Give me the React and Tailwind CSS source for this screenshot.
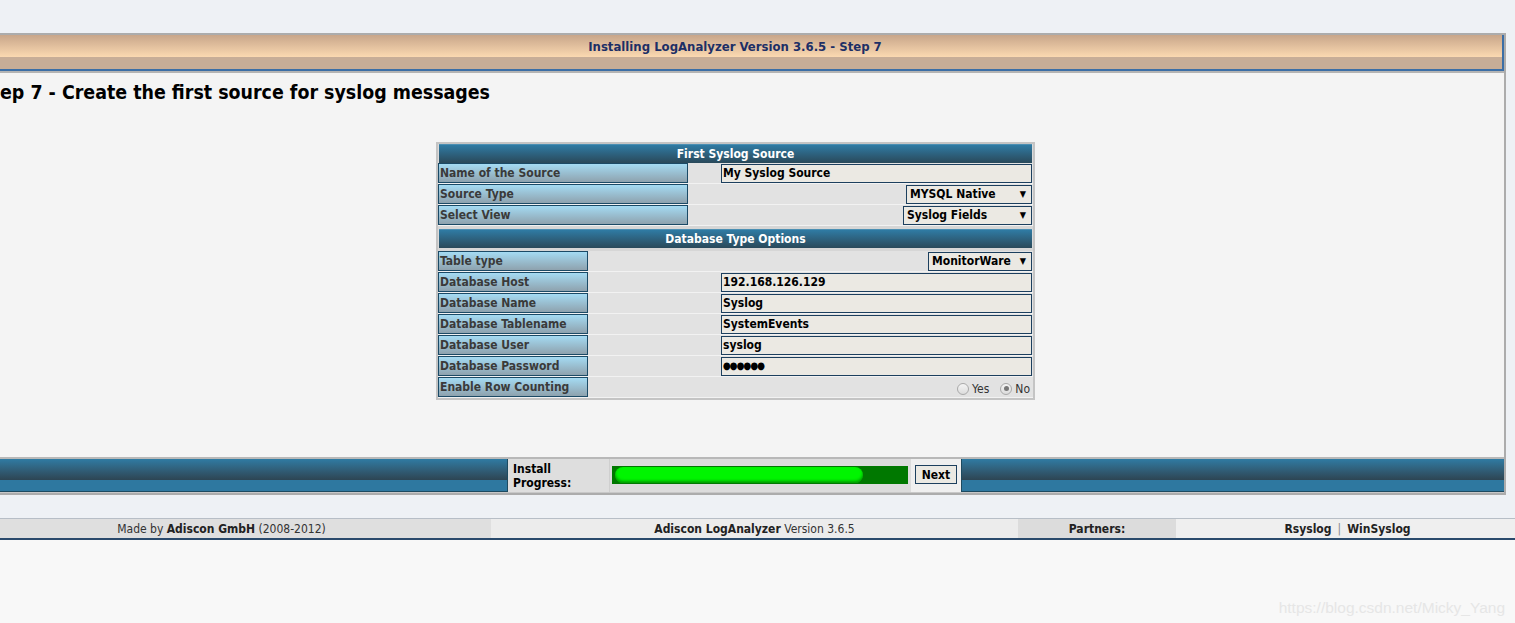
import React from 'react';

const font = { fontFamily: '"DejaVu Sans Condensed", "DejaVu Sans", sans-serif' };

const labelCls =
  'flex items-center h-full border border-[#1b4a66] bg-gradient-to-b from-[#a4dbf3] to-[#8ea2ae] pl-px text-[12px] font-bold text-[#3a3a3a] leading-none';

const Header = ({ children, className = '' }) => (
  <div
    className={`h-[19px] mx-px flex items-center justify-center border-t border-[#4b8fb3] bg-gradient-to-b from-[#2f7ba4] to-[#29495a] text-[12px] font-bold text-white leading-none ${className}`}
  >
    {children}
  </div>
);

const Row = ({ label, labelW, children }) => (
  <div className="h-[21px] flex items-stretch border-b border-[#f2f2f2] bg-[#e2e2e2]">
    <div className={labelW}>
      <div className={labelCls}>{label}</div>
    </div>
    <div className="flex-1 flex items-center justify-end pr-px">{children}</div>
  </div>
);

const TextField = ({ value }) => (
  <div className="w-[311px] h-[19px] border border-[#1c3f5e] bg-[#ebe9e3] flex items-center pl-px text-[12px] font-bold text-black leading-none">
    {value}
  </div>
);

const SelectField = ({ value, w }) => (
  <div
    className={`${w} h-[19px] border border-[#1c3f5e] bg-[#ebe9e3] flex items-center justify-between px-[3px] text-[12px] font-bold text-black leading-none`}
  >
    <span>{value}</span>
    <span className="text-[9px] pr-[2px]">▼</span>
  </div>
);

const Radio = ({ checked }) => (
  <span className="w-[12px] h-[12px] rounded-full border border-[#a9a9a9] bg-gradient-to-b from-[#f4f4f4] to-[#dcdcdc] flex items-center justify-center">
    {checked && <span className="w-[5px] h-[5px] rounded-full bg-[#777]" />}
  </span>
);

const Bar = ({ className = '' }) => (
  <div className={`flex flex-col ${className}`}>
    <div className="h-[21px] bg-gradient-to-b from-[#2f7ba3] to-[#2d4553]" />
    <div className="flex-1 bg-[#2e78a0] border-b border-[#1d4a60]" />
  </div>
);

export default function App() {
  return (
    <div className="relative w-full h-[623px] overflow-hidden bg-[#f8f8f8]" style={font}>
      <div className="bg-[#eef1f5] pt-[33px] pb-[23px]">
        {/* main box */}
        <div className="w-[1506px] border-y-2 border-r-2 border-[#acacac]">
          {/* title bar */}
          <div className="h-[36px] flex flex-col border-b-2 border-r-2 border-[#3b6ea6] relative">
            <div className="h-[22px] bg-gradient-to-b from-[#c8a68a] to-[#fbd9b1]" />
            <div className="flex-1 bg-[#c7ad97]" />
            <div className="absolute inset-0 flex items-center justify-center pb-[11px] pr-[32px] text-[13px] font-bold text-[#1c2f66]">
              Installing LogAnalyzer Version 3.6.5 - Step 7
            </div>
          </div>
          <div className="h-[2px] bg-[#b4b4b4]" />

          {/* content */}
          <div className="h-[384px] bg-[#f4f4f4] pt-[8px]">
            <h1 className="text-[19.4px] font-bold text-black leading-[23px]">
              ep 7 - Create the first source for syslog messages
            </h1>

            <div className="ml-[436px] mt-[38px] w-[599px] border-2 border-[#c4c4c4] bg-[#dadada] flex flex-col">
              <Header>First Syslog Source</Header>
              <Row label="Name of the Source" labelW="w-[250px]">
                <TextField value="My Syslog Source" />
              </Row>
              <Row label="Source Type" labelW="w-[250px]">
                <SelectField value="MYSQL Native" w="w-[126px]" />
              </Row>
              <Row label="Select View" labelW="w-[250px]">
                <SelectField value="Syslog Fields" w="w-[129px]" />
              </Row>
              <div className="h-[3px] bg-[#d6d6d6]" />
              <Header>Database Type Options</Header>
              <div className="h-[3px] bg-[#d6d6d6]" />
              <Row label="Table type" labelW="w-[150px]">
                <SelectField value="MonitorWare" w="w-[104px]" />
              </Row>
              <Row label="Database Host" labelW="w-[150px]">
                <TextField value="192.168.126.129" />
              </Row>
              <Row label="Database Name" labelW="w-[150px]">
                <TextField value="Syslog" />
              </Row>
              <Row label="Database Tablename" labelW="w-[150px]">
                <TextField value="SystemEvents" />
              </Row>
              <Row label="Database User" labelW="w-[150px]">
                <TextField value="syslog" />
              </Row>
              <Row label="Database Password" labelW="w-[150px]">
                <TextField value={<span className="text-[10px] tracking-[-1px]">●●●●●●</span>} />
              </Row>
              <Row label="Enable Row Counting" labelW="w-[150px]">
                <div className="flex items-center gap-[3px] text-[12px] text-[#333] pr-[2px] pt-[3px]">
                  <Radio />
                  <span className="mr-[8px]">Yes</span>
                  <Radio checked />
                  <span>No</span>
                </div>
              </Row>
            </div>
          </div>

          {/* progress bar */}
          <div className="h-[2px] bg-[#b8b8b8]" />
          <div className="h-[34px] flex border-b border-[#c8c8c8]">
            <Bar className="w-[507px]" />
            <div className="w-[102px] bg-[#dedede] border-l border-[#1d4a60] flex flex-col justify-center pl-[5px] text-[12px] font-bold text-black leading-[14px]">
              <span>Install</span>
              <span>Progress:</span>
            </div>
            <div className="w-[302px] bg-[#dcdcdc] border-l border-[#cfcfcf] flex items-center pl-[2px] pb-[2px]">
              <div className="w-[296px] h-[18px] bg-[#007800] flex items-center pl-[3px]">
                <div className="w-[248px] h-[16px] rounded-full bg-[#00f500] shadow-[inset_0_-2px_3px_rgba(0,90,0,0.6)]" />
              </div>
            </div>
            <div className="w-[50px] bg-[#efefef] flex items-center justify-center pb-[2px]">
              <div className="w-[42px] h-[19px] border border-[#1c3f5e] bg-[#ebe9e3] flex items-center justify-center text-[12px] font-bold text-black leading-none">
                Next
              </div>
            </div>
            <Bar className="flex-1 border-l border-[#1d4a60]" />
          </div>
        </div>
      </div>

      {/* footer */}
      <div className="h-[22px] flex border-t border-[#b7bec6] border-b-2 border-b-[#2a4a6c] text-[12px] text-[#333] leading-none">
        <div className="w-[491px] bg-[#dfdfdf] flex items-center justify-center pr-[48px]">
          Made by&nbsp;<b className="text-[#222]">Adiscon GmbH</b>&nbsp;(2008-2012)
        </div>
        <div className="w-[527px] bg-[#ececec] flex items-center justify-center">
          <b className="text-[#222]">Adiscon LogAnalyzer</b>&nbsp;Version 3.6.5
        </div>
        <div className="w-[158px] bg-[#dcdcdc] flex items-center justify-center font-bold text-[#222]">
          Partners:
        </div>
        <div className="flex-1 bg-[#efefef] flex items-center justify-center font-bold text-[#222] pl-[4px]">
          Rsyslog<span className="font-normal text-[#888] mx-[6px]">|</span>WinSyslog
        </div>
      </div>

      {/* watermark */}
      <div
        className="absolute right-[10px] bottom-[4px] text-[15.5px] text-[#e6e6e6]"
        style={{ fontFamily: '"Liberation Sans", Arial, sans-serif' }}
      >
        https://blog.csdn.net/Micky_Yang
      </div>
    </div>
  );
}
